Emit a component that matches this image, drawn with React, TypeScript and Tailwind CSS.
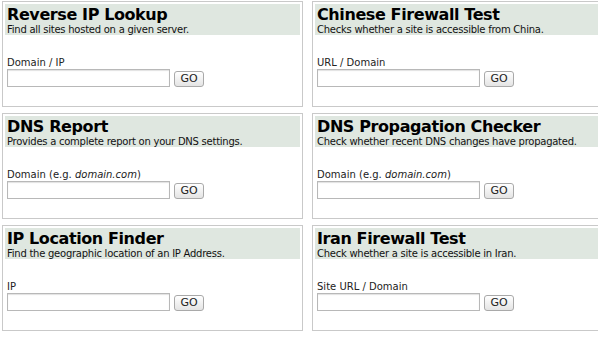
import React from 'react';

interface Tool {
  title: string;
  desc: string;
  label: React.ReactNode;
}

const tools: Tool[] = [
  { title: 'Reverse IP Lookup', desc: 'Find all sites hosted on a given server.', label: 'Domain / IP' },
  { title: 'Chinese Firewall Test', desc: 'Checks whether a site is accessible from China.', label: 'URL / Domain' },
  {
    title: 'DNS Report',
    desc: 'Provides a complete report on your DNS settings.',
    label: (
      <>
        Domain (e.g. <i>domain.com</i>)
      </>
    ),
  },
  {
    title: 'DNS Propagation Checker',
    desc: 'Check whether recent DNS changes have propagated.',
    label: (
      <>
        Domain (e.g. <i>domain.com</i>)
      </>
    ),
  },
  { title: 'IP Location Finder', desc: 'Find the geographic location of an IP Address.', label: 'IP' },
  { title: 'Iran Firewall Test', desc: 'Check whether a site is accessible in Iran.', label: 'Site URL / Domain' },
];

function ToolCard({ title, desc, label }: Tool) {
  return (
    <div className="h-[106px] w-[301px] border border-[#c9c9c9] bg-white p-[2px]">
      <div className="h-[31px] bg-[#dfe7e0] pl-[2px] pt-[2px]">
        <h2 className="text-[16px] font-bold leading-[18px] tracking-[-0.4px] text-black">{title}</h2>
        <p className="text-[10px] leading-[11px] tracking-[-0.25px] text-[#111]">{desc}</p>
      </div>
      <div className="pl-[2px] pt-[22px]">
        <label className="block text-[10px] leading-[12px] text-[#222]">{label}</label>
        <div className="flex items-end gap-[4px]">
          <input
            type="text"
            className="h-[18px] w-[163px] border border-[#b8b8b8] bg-white shadow-[inset_0_1px_1px_rgba(0,0,0,0.12)] outline-none"
          />
          <button className="h-[16px] w-[30px] rounded-[3px] border border-[#a9a9a9] bg-gradient-to-b from-white to-[#e4e4e4] text-[11px] leading-[14px] text-[#222]">
            GO
          </button>
        </div>
      </div>
    </div>
  );
}

export default function App() {
  return (
    <div className="h-[337px] w-[598px] overflow-hidden bg-white font-['DejaVu_Sans',Verdana,sans-serif]">
      <div className="grid w-[620px] grid-cols-[301px_301px] gap-x-[9px] gap-y-[6px] pl-[2px] pt-[1px]">
        {tools.map((t) => (
          <ToolCard key={t.title} {...t} />
        ))}
      </div>
    </div>
  );
}
